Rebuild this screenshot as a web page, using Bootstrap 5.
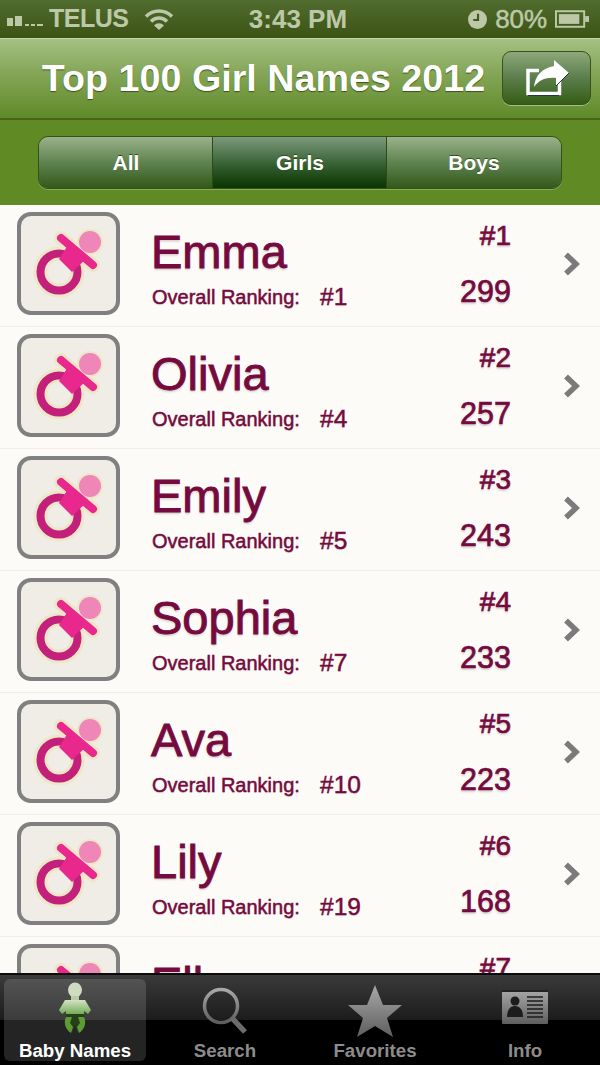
<!DOCTYPE html>
<html lang="en">
<head>
<meta charset="UTF-8" />
<meta name="viewport" content="width=device-width, initial-scale=1" />
<title>Top 100 Girl Names 2012</title>
<link href="https://cdn.jsdelivr.net/npm/bootstrap@5.3.0/dist/css/bootstrap.min.css" rel="stylesheet" />
<style>
html, body { height: 100%; overflow: hidden; }
body { font-family: "Liberation Sans", Arial, sans-serif; background: #fcfbf7; }
.phone-page { height: 1065px; width: 600px; }

.status-strip { height: 38px; padding: 0 10px 0 7px; color: #bcc8a8; font-size: 26px; font-weight: 700; background: linear-gradient(#506c2e, #3c5414); }
.status-strip .carrier { margin-left: 6px; font-size: 25px; letter-spacing: -.5px; }
.status-strip .clock { left: 0; right: 4px; text-align: center; }
.status-strip .pct { font-weight: 400; -webkit-text-stroke: .5px #bcc8a8; letter-spacing: -.1px; }

.title-bar { height: 82px; padding: 12px 9px 14px 0; background: linear-gradient(#a6c082, #83a556 45%, #5f8a28); border-top: 1px solid #c3d6a8; border-bottom: 2px solid #47641d; }
.title-bar h1 { margin: 0; font-size: 37.7px; font-weight: 700; color: #fff; line-height: 1; text-shadow: 0 1px 1px #3c5414; flex-grow: 1; text-align: center; padding: 2px 0 0 25px; }
.share-btn { width: 89px; height: 54px; flex-shrink: 0; padding: 0; border: 1px solid #39521a; border-radius: 9px; background: linear-gradient(#8ea87a, #5f8250 45%, #355c16); box-shadow: 0 1px 0 #a6c082; }

.segment-bar { height: 85px; padding: 16px 38px 0; background: #5f8a24; }
.segment-bar .btn-group { width: 524px; height: 53px; border: 1px solid #36501a; border-radius: 10px; overflow: hidden; box-shadow: 0 1px 0 #8cab5c; }
.segment-bar .btn-group > .seg-btn { flex: 1 1 0; border: 0; border-radius: 0; margin: 0; padding: 0; color: #fff; font-size: 21px; font-weight: 700; background: linear-gradient(#9ab28a, #5f8350 50%, #32591a); text-shadow: 0 -1px 0 #33501a; }
.segment-bar .btn-group > .seg-btn + .seg-btn { border-left: 1px solid #2c4a16; }
.segment-bar .btn-group > .seg-btn.selected { background: linear-gradient(#7c9a7c, #2f5a2a 60%, #0a3500); color: #fff; }

.name-list { flex: 1 1 0; min-height: 0; overflow: hidden; background: #fcfbf7; }
.name-row { height: 122px; flex-shrink: 0; padding: 7px 0 0 17px; background: #fcfbf7; border: 0; border-bottom: 2px solid #f3efe8; border-radius: 0; color: #750a3e; position: static; }
.thumb-box { width: 103px; height: 103px; flex-shrink: 0; border: 4px solid #808080; border-radius: 14px; background: #f0ece6; }
.name-main { width: 308px; padding-left: 31px; }
.baby-name { font-size: 47px; line-height: 54px; margin-top: 13px; -webkit-text-stroke: .9px #750a3e; text-shadow: 0 2px 2px #d6d0cc; }
.rank-line { font-size: 20px; line-height: 24px; margin-top: 6px; padding-left: 1px; -webkit-text-stroke: .45px #750a3e; text-shadow: 0 1px 1px #ddd8d2; display: flex; }
.rank-line span:first-child { width: 168px; }
.rank-line span:last-child { font-size: 24.5px; }
.count-col { width: 86px; text-align: right; padding-right: 3px; }
.count-col .place { font-size: 28px; line-height: 34px; margin-top: 7px; -webkit-text-stroke: .7px #750a3e; text-shadow: 0 2px 2px #d6d0cc; }
.count-col .votes { font-size: 30.5px; line-height: 36px; margin-top: 20px; -webkit-text-stroke: .7px #750a3e; text-shadow: 0 2px 2px #d6d0cc; }
.row-arrow { margin-left: 49px; margin-top: 39px; }

.tab-strip { height: 92px; flex-shrink: 0; padding: 4px 4px 4px; border-top: 2px solid #0c0c0c; background: linear-gradient(#3a3a3a, #1c1c1c 50%, #000 50%); }
.tab-cell { width: 142px; height: 82px; margin-right: 8px; color: #8c8c8c; font-size: 18.7px; font-weight: 700; border-radius: 6px; line-height: 1; }
.tab-cell:last-child { margin-right: 0; }
.tab-cell.on { color: #fff; background: rgba(255,255,255,.14); }
.tab-cell .tab-img { height: 63px; }
</style>
</head>
<body>
<div class="phone-page d-flex flex-column">

	<div class="status-strip d-flex align-items-center position-relative">
		<svg width="36" height="11" viewBox="0 0 36 11" class="mt-1"><g fill="#bcc8a8"><rect y="2" width="6" height="8"/><rect x="8" y="0" width="7" height="10"/><rect x="18" y="8" width="4" height="2"/><rect x="24" y="8" width="4" height="2"/><rect x="30" y="8" width="6" height="2"/></g></svg>
		<span class="carrier">TELUS</span>
		<svg width="30" height="22" viewBox="0 0 30 22" class="ms-3"><g fill="none" stroke="#bcc8a8" stroke-width="3.4"><path d="M2 8.5a18 18 0 0 1 26 0"/><path d="M7 13.5a11 11 0 0 1 16 0"/></g><path d="M15 22l-5-4.6a7 7 0 0 1 10 0z" fill="#bcc8a8"/></svg>
		<span class="clock position-absolute">3:43 PM</span>
		<span class="ms-auto d-flex align-items-center">
			<svg width="19" height="19" viewBox="0 0 18 18"><circle cx="9" cy="9" r="9" fill="#bcc8a8"/><path d="M9.5 3.5v6H5" fill="none" stroke="#3f5718" stroke-width="2"/></svg>
			<span class="pct ms-2">80%</span>
			<svg width="35" height="18" viewBox="0 0 36 18" class="ms-2"><rect x="1" y="1" width="29" height="16" fill="none" stroke="#bcc8a8" stroke-width="2"/><rect x="4" y="4" width="21" height="10" fill="#bcc8a8"/><rect x="31" y="6" width="4" height="6" fill="#bcc8a8"/></svg>
		</span>
	</div>

	<div class="title-bar d-flex align-items-center">
		<h1>Top 100 Girl Names 2012</h1>
		<button class="btn share-btn d-flex align-items-center justify-content-center" type="button" aria-label="Share">
			<svg width="44" height="36" viewBox="0 0 44 36"><path d="M14 10.500H3V33.500H34.500V21" fill="none" stroke="#fff" stroke-width="3.500"/><path d="M29 0L44 13 31 26V18C21 17 14 20 9 27 10 15 18 8 29 6Z" fill="#fff"/><path d="M44 13L31 26M3 35.500H34" stroke="#26344e" stroke-width="1" fill="none"/></svg>
		</button>
	</div>

	<div class="segment-bar">
		<div class="btn-group d-flex" role="group">
			<button class="btn seg-btn" type="button">All</button>
			<button class="btn seg-btn selected" type="button">Girls</button>
			<button class="btn seg-btn" type="button">Boys</button>
		</div>
	</div>

	<div class="list-group list-group-flush name-list" id="name-list"></div>

	<div class="tab-strip d-flex">
		<div class="tab-cell on d-flex flex-column align-items-center">
			<div class="tab-img">
				<svg width="36" height="62" viewBox="0 0 36 62"><defs><linearGradient id="babyTop" x1="0" y1="0" x2="0" y2="1"><stop offset="0" stop-color="#d4e2c4"/><stop offset="1" stop-color="#74ac58"/></linearGradient><linearGradient id="tabGrey" x1="0" y1="0" x2="0" y2="1"><stop offset="0" stop-color="#a8a8a8"/><stop offset="1" stop-color="#5e5e5e"/></linearGradient></defs><ellipse cx="18" cy="11" rx="7" ry="7.500" fill="#cfdcc0"/><rect x="14" y="17" width="8" height="5" fill="#b8cca6"/><path d="M8 21h20l6 10-3 4-4-3v3H9v-3l-4 3-3-4z" fill="url(#babyTop)"/><path d="M9 35h18v6l-6 13-3-8-3 8-6-13z" fill="#26401a"/><path d="M9 38c-3 6 0 13 5 16l2-6-3-4 2-6zM27 38c3 6 0 13-5 16l-2-6 3-4-2-6z" fill="#5d9b35"/></svg>
			</div>
			<span>Baby Names</span>
		</div>
		<div class="tab-cell d-flex flex-column align-items-center">
			<div class="tab-img">
				<svg width="48" height="62" viewBox="0 0 48 62"><circle cx="20" cy="27" r="16.500" fill="none" stroke="url(#tabGrey)" stroke-width="3.500"/><path d="M31 39l13 14" stroke="#6c6c6c" stroke-width="5.500"/></svg>
			</div>
			<span>Search</span>
		</div>
		<div class="tab-cell d-flex flex-column align-items-center">
			<div class="tab-img">
				<svg width="54" height="62" viewBox="0 0 54 62"><path d="M27 6l8 20h19L39 39l6 19-18-11-18 11 6-19L0 26h19z" fill="url(#tabGrey)"/></svg>
			</div>
			<span>Favorites</span>
		</div>
		<div class="tab-cell d-flex flex-column align-items-center">
			<div class="tab-img">
				<svg width="46" height="62" viewBox="0 0 46 62"><rect y="11" width="46" height="34" rx="1" fill="url(#tabGrey)"/><rect y="11" width="46" height="2" fill="#222"/><circle cx="13" cy="22" r="4.500" fill="#1c1c1c"/><path d="M5 38c0-7 3-11 8-11s8 4 8 11z" fill="#1c1c1c"/><path d="M25 18h16M25 22h16M25 26h16M25 30h16M25 34h16M25 38h16" stroke="#1c1c1c" stroke-width="1.600"/></svg>
			</div>
			<span>Info</span>
		</div>
	</div>
</div>

<script>
	// last row is cut by the tab bar, only its name and place show
	const names = [
		["Emma", 1, 1, 299],
		["Olivia", 2, 4, 257],
		["Emily", 3, 5, 243],
		["Sophia", 4, 7, 233],
		["Ava", 5, 10, 223],
		["Lily", 6, 19, 168],
		["Ell", 7]
	];

	const pacifier = `<svg width="95" height="95" viewBox="0 0 95 95">
		<g fill="none" stroke="#efe6c8" stroke-width="14" stroke-linecap="round"><circle cx="38" cy="56" r="18.500"/><path d="M40 22L72 49"/></g>
		<circle cx="69" cy="26" r="13" fill="#efe6c8"/>
		<circle cx="69" cy="26" r="11" fill="#ee86b8"/>
		<path d="M47 31L64 42 51 53 41 42z" fill="#efe6c8" stroke="#efe6c8" stroke-width="4"/>
		<circle cx="38" cy="56" r="18.500" fill="none" stroke="#c2207a" stroke-width="8"/>
		<path d="M40 22L72 49" stroke="#e8288c" stroke-width="8" stroke-linecap="round"/>
		<path d="M47 29L65 43 51 56 38 43z" fill="#e8288c"/>
	</svg>`;

	const chevron = `<svg width="18" height="24" viewBox="0 0 18 24"><path d="M3 2.500l10 9.500-10 9.500" fill="none" stroke="#7b7b7b" stroke-width="5.500"/></svg>`;

	document.getElementById("name-list").innerHTML = names.map(function (n) {
		const rankLine = n[2] ? `<div class="rank-line"><span>Overall Ranking:</span><span>#${n[2]}</span></div>` : "";
		const votes = n[3] ? `<div class="votes">${n[3]}</div>` : "";
		return `<div class="list-group-item name-row d-flex">
			<div class="thumb-box d-flex align-items-center justify-content-center">${pacifier}</div>
			<div class="name-main">
				<div class="baby-name">${n[0]}</div>
				${rankLine}
			</div>
			<div class="count-col">
				<div class="place">#${n[1]}</div>
				${votes}
			</div>
			<div class="row-arrow">${chevron}</div>
		</div>`;
	}).join("");
</script>
<script src="https://cdn.jsdelivr.net/npm/bootstrap@5.3.0/dist/js/bootstrap.bundle.min.js"></script>
</body>
</html>
